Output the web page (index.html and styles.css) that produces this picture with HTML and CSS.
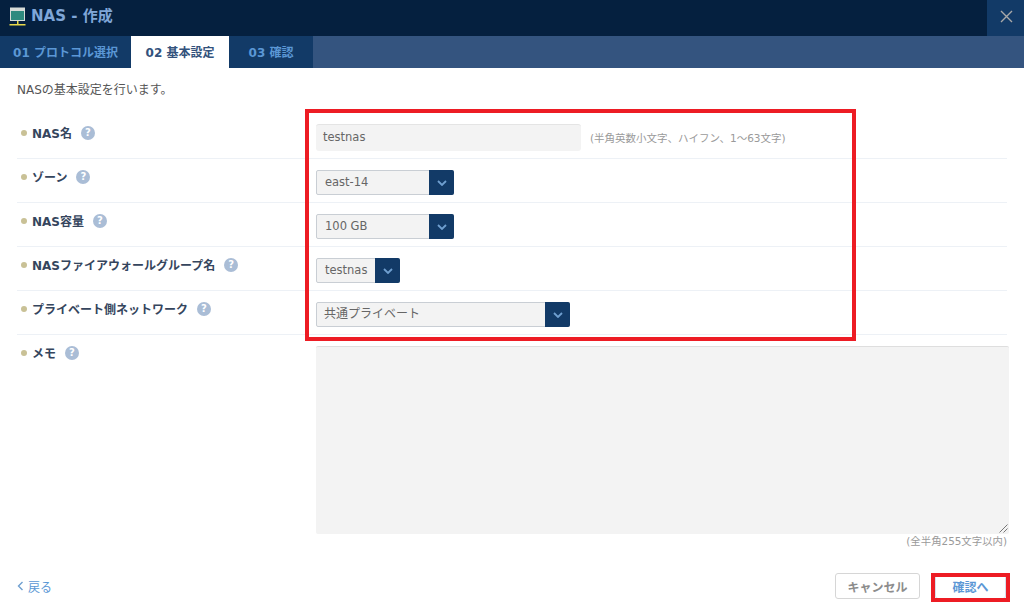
FILE: index.html
```html
<!DOCTYPE html>
<html lang="ja">
<head>
<meta charset="utf-8">
<title>NAS - 作成</title>
<link rel="stylesheet" href="styles.css">
</head>
<body>
<div class="page">
  <header class="header">
    <div class="title">
      <svg class="title-icon" width="18" height="20" viewBox="0 0 18 20"><rect x="1" y="0.5" width="15" height="13.5" fill="#d8dcd8"/><rect x="2" y="4" width="13" height="9" fill="#2f8a7e"/><rect x="8" y="14" width="1.5" height="3" fill="#e8d84a"/><rect x="0.5" y="17" width="16" height="1.5" fill="#e8d84a"/></svg>
      <span>NAS - 作成</span>
    </div>
    <button class="close" aria-label="閉じる"><svg width="13" height="13" viewBox="0 0 13 13"><path d="M1 1L12 12M12 1L1 12" stroke="#a9a9a9" stroke-width="1.4" fill="none"/></svg></button>
  </header>
  <nav class="tabs">
    <div class="tab tab-1">01 プロトコル選択</div>
    <div class="tab tab-2 active">02 基本設定</div>
    <div class="tab tab-3">03 確認</div>
  </nav>
  <main class="content">
    <p class="intro">NASの基本設定を行います。</p>
    <div class="row">
      <div class="label"><span>NAS名</span><i class="help">?</i></div>
      <div class="value"><div class="text-input">testnas</div><span class="hint">(半角英数小文字、ハイフン、1～63文字)</span></div>
    </div>
    <div class="row">
      <div class="label"><span>ゾーン</span><i class="help">?</i></div>
      <div class="value"><div class="select w-138"><span>east-14</span><b class="arrow"><svg width="10" height="6" viewBox="0 0 10 6"><path d="M1 1L5 5L9 1" stroke="#6f9fd0" stroke-width="1.8" fill="none"/></svg></b></div></div>
    </div>
    <div class="row">
      <div class="label"><span>NAS容量</span><i class="help">?</i></div>
      <div class="value"><div class="select w-138"><span>100 GB</span><b class="arrow"><svg width="10" height="6" viewBox="0 0 10 6"><path d="M1 1L5 5L9 1" stroke="#6f9fd0" stroke-width="1.8" fill="none"/></svg></b></div></div>
    </div>
    <div class="row">
      <div class="label"><span>NASファイアウォールグループ名</span><i class="help">?</i></div>
      <div class="value"><div class="select w-84"><span>testnas</span><b class="arrow"><svg width="10" height="6" viewBox="0 0 10 6"><path d="M1 1L5 5L9 1" stroke="#6f9fd0" stroke-width="1.8" fill="none"/></svg></b></div></div>
    </div>
    <div class="row">
      <div class="label"><span>プライベート側ネットワーク</span><i class="help">?</i></div>
      <div class="value"><div class="select w-254 jp"><span>共通プライベート</span><b class="arrow"><svg width="10" height="6" viewBox="0 0 10 6"><path d="M1 1L5 5L9 1" stroke="#6f9fd0" stroke-width="1.8" fill="none"/></svg></b></div></div>
    </div>
    <div class="row row-memo">
      <div class="label"><span>メモ</span><i class="help">?</i></div>
      <div class="value memo-col">
        <div class="textarea"><svg class="grip" width="9" height="9" viewBox="0 0 9 9"><path d="M8.5 0.5L0.5 8.5M8.5 4.5L4.5 8.5" stroke="#777" stroke-width="1" fill="none"/></svg></div>
        <div class="count">(全半角255文字以内)</div>
      </div>
    </div>
    <footer class="actions">
      <a class="back"><svg width="7" height="10" viewBox="0 0 7 10"><path d="M5.5 1L1.5 5L5.5 9" stroke="#6f9fd0" stroke-width="1.4" fill="none"/></svg>戻る</a>
      <div class="buttons">
        <button class="btn cancel">キャンセル</button>
        <button class="btn confirm">確認へ</button>
      </div>
    </footer>
  </main>
  <div class="mark mark-form"></div>
  <div class="mark mark-confirm"></div>
</div>
</body>
</html>
```
FILE: styles.css
```css
* { box-sizing: border-box; }
html, body { margin: 0; padding: 0; }
body {
  width: 1024px;
  height: 615px;
  overflow: hidden;
  background: #fff;
  color: #4a4a4a;
  font-family: "DejaVu Sans", "Noto Sans CJK JP", sans-serif;
  font-size: 12px;
}
.page { position: relative; width: 1024px; height: 615px; }

.header {
  height: 36px;
  background: #05203f;
  display: flex;
  justify-content: space-between;
}
.title {
  display: flex;
  align-items: center;
  gap: 4px;
  padding-left: 9px;
  color: #7fa6d8;
  font-size: 15px;
  font-weight: 700;
  height: 29px;
}
.title-icon { flex: none; margin-top: 4px; }
.close {
  width: 37px;
  height: 36px;
  padding: 0 0 4px 1px;
  border: 0;
  background: #123a67;
  display: flex;
  align-items: center;
  justify-content: center;
}

.tabs {
  height: 32px;
  background: #34547f;
  display: flex;
}
.tab {
  display: flex;
  align-items: center;
  justify-content: center;
  padding-bottom: 2px;
  background: #123a67;
  color: #5b97d5;
  font-weight: 700;
  font-size: 12px;
  white-space: nowrap;
}
.tab-1 { width: 131px; }
.tab-2 { width: 98px; }
.tab-3 { width: 84px; }
.tab.active { background: #fff; color: #33527c; }

.content { padding: 0 17px; }
.intro {
  margin: 0;
  height: 47px;
  padding-top: 14px;
  font-size: 12px;
  line-height: 16px;
  color: #555;
}
.row {
  display: grid;
  grid-template-columns: 299px 1fr;
  height: 44px;
  border-bottom: 1px solid #edf1f6;
}
.label {
  display: flex;
  align-items: center;
  height: 16px;
  margin-top: 9.5px;
  font-weight: 700;
  font-size: 12px;
  color: #35455d;
  padding-left: 4px;
  white-space: nowrap;
}
.label::before {
  content: "";
  width: 6px;
  height: 6px;
  border-radius: 50%;
  background: #c9c196;
  margin-right: 5px;
  flex: none;
}
.help {
  display: inline-flex;
  align-items: center;
  justify-content: center;
  width: 14px;
  height: 14px;
  margin-left: 9px;
  border-radius: 50%;
  background: #aabdd6;
  color: #fff;
  font-style: normal;
  font-weight: 700;
  font-size: 10px;
  flex: none;
}
.value { display: flex; align-items: flex-start; padding-top: 11px; }
.text-input {
  width: 265px;
  height: 27px;
  margin-top: -2px;
  padding-left: 7px;
  line-height: 25px;
  background: #f3f3f3;
  border-radius: 3px;
  border-top: 1px solid #e4e4e4;
  color: #666;
  font-size: 11.5px;
}
.hint {
  margin-left: 9px;
  line-height: 26px;
  margin-top: -1px;
  font-size: 10.5px;
  color: #9a9a9a;
  white-space: nowrap;
}
.select {
  height: 25px;
  display: flex;
  justify-content: space-between;
  background: #f3f3f3;
  border: 1px solid #c9ced4;
  border-radius: 2px;
  color: #666;
  font-size: 11.5px;
  line-height: 23px;
  padding-left: 8px;
  white-space: nowrap;
}
.select.jp { font-size: 12px; padding-left: 7px; }
.w-138 { width: 138px; }
.w-84 { width: 84px; }
.w-254 { width: 254px; }
.arrow {
  width: 25px;
  margin: -1px -1px -1px 0;
  background: #123a67;
  display: flex;
  align-items: center;
  justify-content: center;
  border-radius: 0 2px 2px 0;
  flex: none;
}
.row-memo { height: auto; border-bottom: 0; }
.memo-col { display: block; padding-top: 11px; margin-right: -2px; }
.textarea {
  position: relative;
  height: 188px;
  background: #f3f3f3;
  border-top: 1px solid #dedede;
  border-radius: 2px;
}
.grip { position: absolute; right: 1px; bottom: 1px; }
.count {
  padding-right: 2px;
  text-align: right;
  font-size: 10.4px;
  line-height: 14px;
  color: #9a9a9a;
}
.actions {
  display: flex;
  justify-content: space-between;
  align-items: center;
  margin-top: 25px;
  height: 26px;
}
.back {
  display: flex;
  align-items: center;
  gap: 4px;
  color: #5b97d5;
  font-size: 12px;
}
.buttons { display: flex; gap: 15px; margin-right: 1px; }
.btn {
  height: 26px;
  background: #fff;
  border-radius: 3px;
  font-family: inherit;
  font-size: 12px;
  font-weight: 700;
  padding: 0;
}
.cancel { width: 85px; border: 1px solid #d6d6d6; color: #8c8c8c; }
.confirm { width: 71px; border: 1px solid #d6e0ec; color: #5b97d5; }
.mark { position: absolute; border: 4px solid #ed1c24; }
.mark-form { left: 305px; top: 109px; width: 551px; height: 232px; }
.mark-confirm { left: 931px; top: 573px; width: 79px; height: 29px; }
```
